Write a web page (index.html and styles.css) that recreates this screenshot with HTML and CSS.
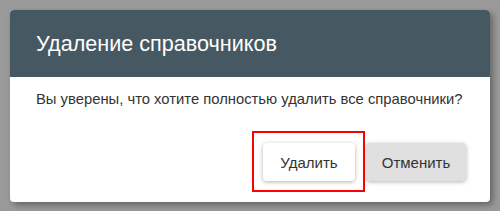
FILE: index.html
```html
<!DOCTYPE html>
<html lang="ru">
<head>
  <meta charset="UTF-8">
  <title>Удаление справочников</title>
  <link rel="stylesheet" href="styles.css">
</head>
<body>
  <div class="dialog">
    <div class="dialog-title">Удаление справочников</div>
    <div class="dialog-text">Вы уверены, что хотите полностью удалить все справочники?</div>
    <div class="dialog-actions">
      <button class="btn btn-ok">Удалить</button>
      <button class="btn btn-cancel">Отменить</button>
    </div>
  </div>
</body>
</html>
```

FILE: styles.css
```css
body {
  margin: 0;
  padding: 10px;
  background: #9a9a9a;
  font-family: "Liberation Sans", Arial, sans-serif;
}

.dialog {
  width: 480px;
  height: 192px;
  background: #fff;
  border-radius: 4px;
  box-shadow: 3px 3px 6px rgba(0,0,0,0.35);
}

.dialog-title {
  height: 67px;
  background: #465862;
  color: #fff;
  font-size: 21.6px;
  padding-left: 26px;
  display: flex;
  align-items: center;
  border-radius: 4px 4px 0 0;
}

.dialog-text {
  padding: 14px 0 0 26px;
  font-size: 14.8px;
  color: #333;
  white-space: nowrap;
}

.dialog-actions {
  display: flex;
  justify-content: flex-end;
  gap: 11px;
  padding: 36px 24px 0 0;
}

.btn {
  height: 38px;
  border: none;
  border-radius: 4px;
  font-family: "Liberation Sans", Arial, sans-serif;
  font-size: 15px;
  color: #333;
  cursor: pointer;
  box-shadow: 0 1px 4px rgba(0,0,0,0.3);
}

.btn-ok {
  position: relative;
  width: 92px;
  background: #fff;
}

/* red highlight frame around the button */
.btn-ok::after {
  content: "";
  position: absolute;
  left: -11px;
  right: -10px;
  top: -12px;
  bottom: -11px;
  border: 2px solid #f00;
}

.btn-cancel {
  width: 100px;
  background: #e0e0e0;
}
```
